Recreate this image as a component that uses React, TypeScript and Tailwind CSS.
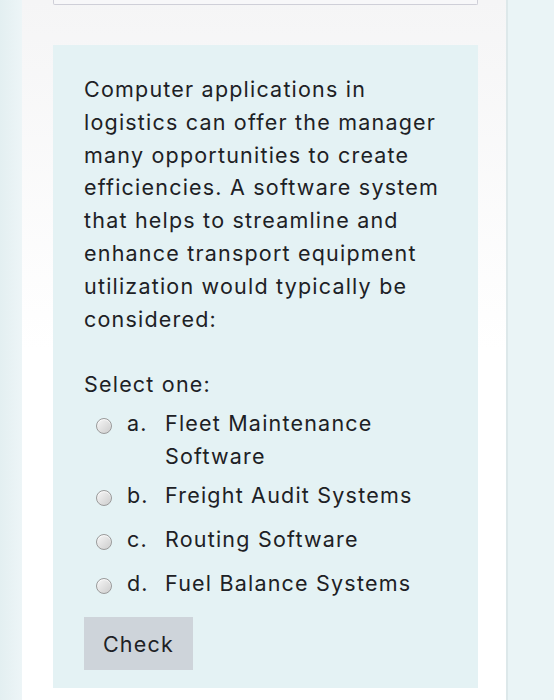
import React from "react";

const font = { fontFamily: '"Inter", "Noto Sans", sans-serif' };

function Radio() {
  return (
    <span className="mt-[11px] block h-[16px] w-[16px] shrink-0 rounded-full border border-[#9a9a9a] bg-gradient-to-br from-[#f7f7f7] to-[#cdcdcd] shadow-[inset_0_1px_1px_rgba(255,255,255,0.8)]" />
  );
}

const options = [
  { l: "a.", t: "Fleet Maintenance Software", mb: "mb-[-5px]" },
  { l: "b.", t: "Freight Audit Systems", mb: "" },
  { l: "c.", t: "Routing Software", mb: "" },
  { l: "d.", t: "Fuel Balance Systems", mb: "" },
];

export default function App() {
  return (
    <div className="flex h-[700px] w-[554px] overflow-hidden bg-[#eaf4f6]" style={font}>
      <div className="w-[22px] shrink-0 bg-gradient-to-r from-[#e3eff1] to-[#edf5f7]" />
      <div className="flex w-[486px] shrink-0 flex-col border-r-2 border-[#dde8ea] bg-gradient-to-b from-[#f5f5f6] via-white to-white pl-[31px] pr-[28px]">
        <div className="h-[5px] rounded-b-[2px] border-x border-b border-[#cfcfd8] bg-[#f7f7f9]" />
        <div className="mt-[40px] flex h-[643px] flex-col bg-[#e4f2f4] pl-[31px] pr-[31px] pt-[28px] text-[21.5px] tracking-[1.2px] text-[#1d2125]">
          <p className="leading-[32.8px]">
            Computer applications in logistics can offer the manager many opportunities to create
            efficiencies. A software system that helps to streamline and enhance transport equipment
            utilization would typically be considered:
          </p>
          <p className="mt-[33px] leading-[32px]">Select one:</p>
          <div className="mt-[7px] flex flex-col gap-[11px] pl-[12px]">
            {options.map((o) => (
              <div key={o.l} className={`flex items-start ${o.mb}`}>
                <Radio />
                <span className="ml-[15px] w-[38px] shrink-0 leading-[33px]">{o.l}</span>
                <span className="w-[265px] leading-[33px]">{o.t}</span>
              </div>
            ))}
          </div>
          <div className="mt-[17px]">
            <button className="h-[53px] w-[109px] bg-[#ced4da] text-[21.5px] tracking-[1.2px] text-[#1d2125]">
              Check
            </button>
          </div>
        </div>
      </div>
      <div className="flex-1 bg-[#eaf4f6]" />
    </div>
  );
}
